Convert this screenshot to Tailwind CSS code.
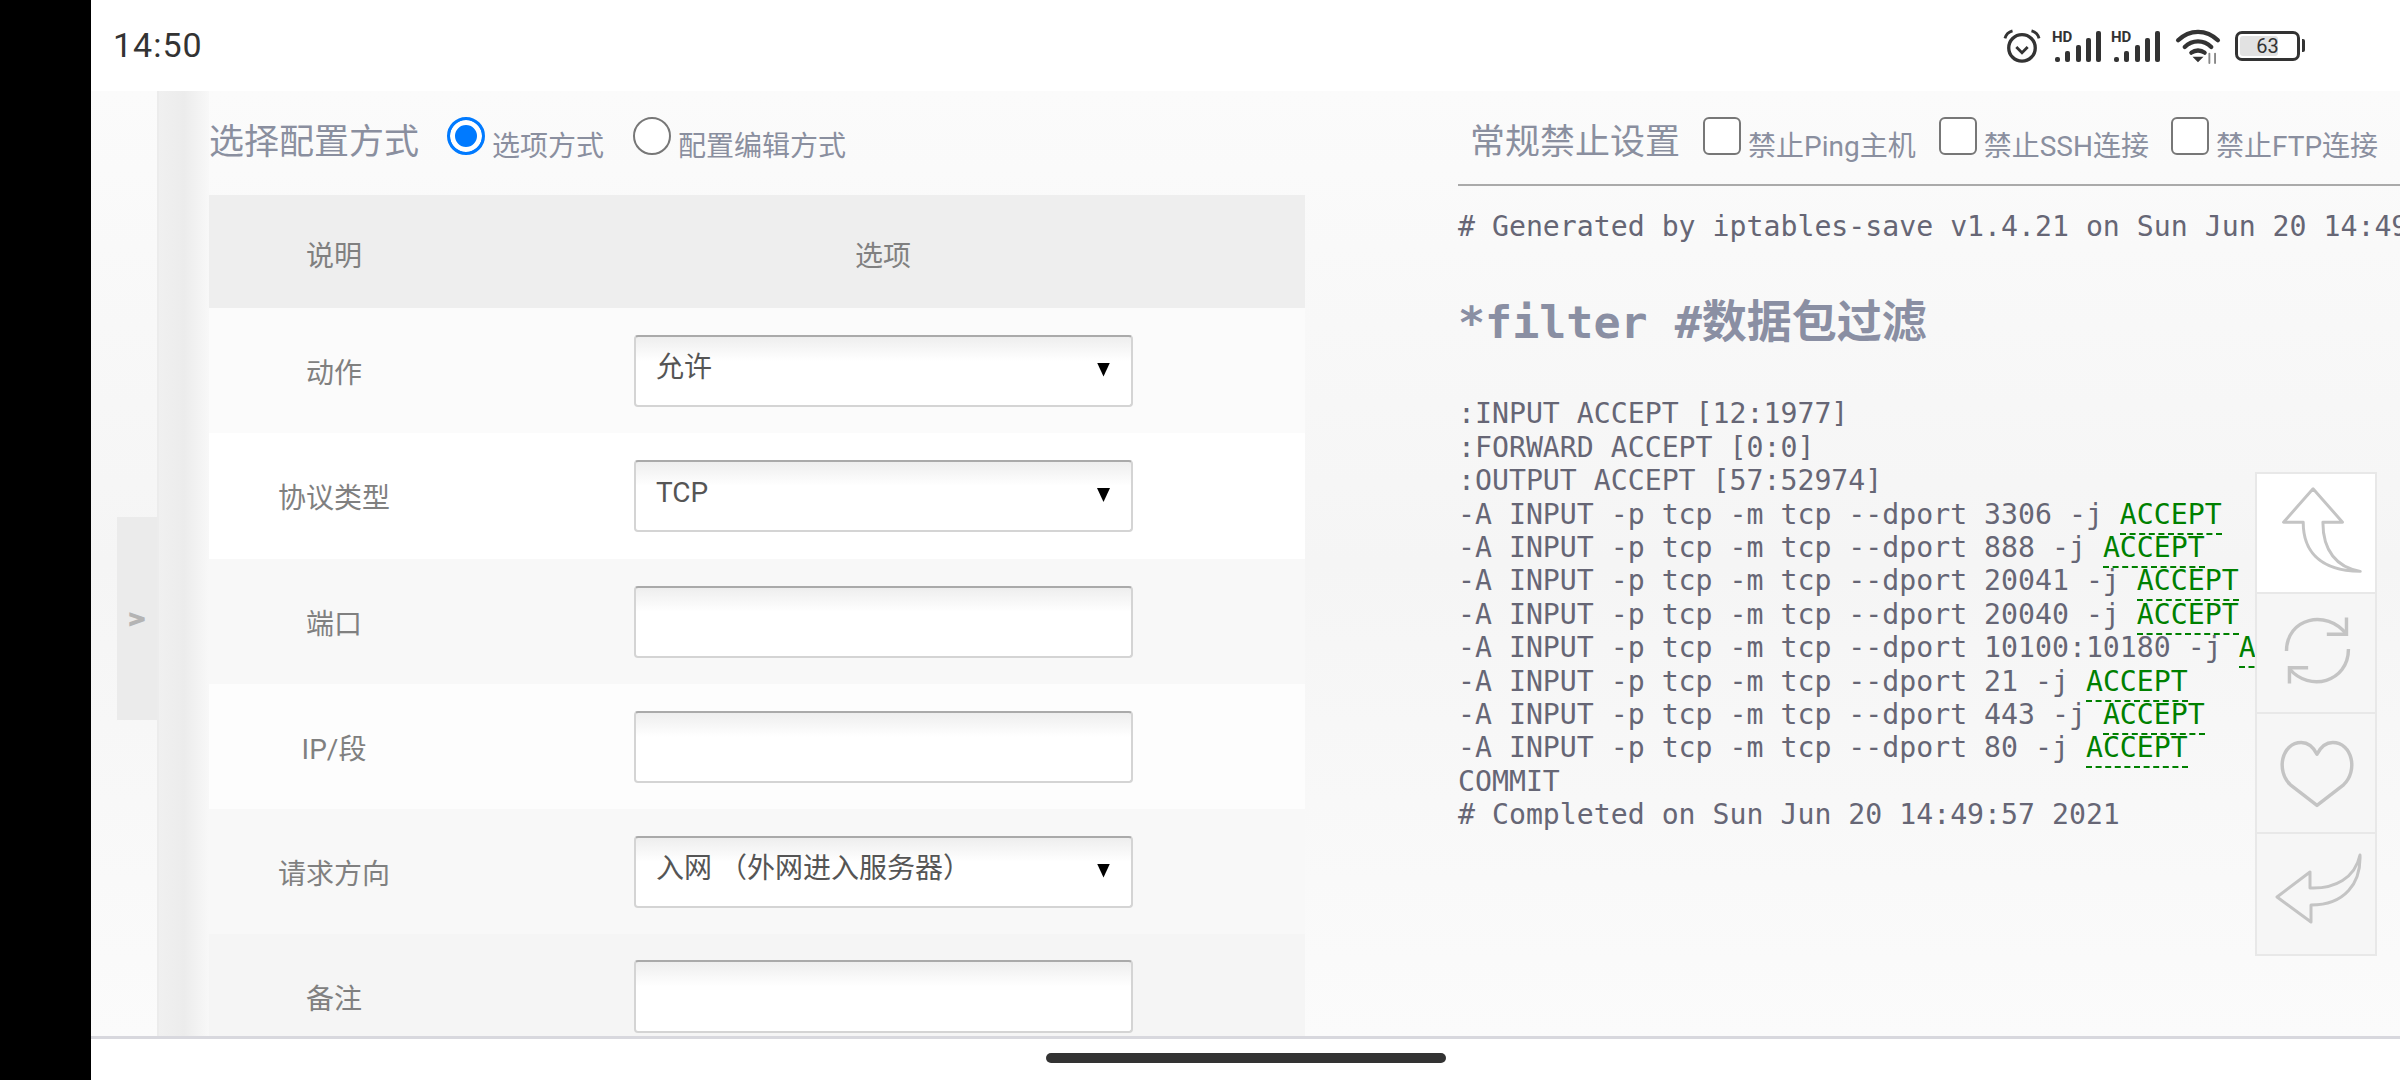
<!DOCTYPE html>
<html lang="zh-CN">
<head>
    <meta charset="UTF-8">
    <title>iptables</title>
    <script src="https://cdn.jsdelivr.net/npm/@tailwindcss/browser@4"></script>
</head>
<body class="bg-black overflow-hidden">
<div class="flex w-[2400px] h-[1080px] overflow-hidden [font-family:Roboto,'Noto_Sans_CJK_SC',sans-serif]">
    <div class="w-[91px] shrink-0 bg-black"></div>
    <div class="relative flex-1 flex flex-col min-w-0 bg-white">

        <!-- status bar -->
        <div class="h-[91px] shrink-0 flex items-center justify-between pl-[22px] pr-[95px]">
            <span class="text-[34px] text-[#333] tracking-[1px]">14:50</span>
            <div class="flex items-center">
                <svg class="w-[38px] h-[36px] text-[#333]" viewBox="0 0 40 38" fill="none" stroke="currentColor" stroke-width="3.5">
                    <circle cx="20" cy="21" r="14"/>
                    <path d="M14 20l6 6 6-6" stroke-width="3"/>
                    <path d="M2 11c1-4 4-7 8-8M38 11c-1-4-4-7-8-8" stroke-width="3"/>
                </svg>
                <div class="relative w-[51px] h-[36px] ml-[11px]">
                    <span class="absolute left-0 top-0 text-[15px] font-bold leading-[18px] text-[#333]">HD</span>
                    <svg class="absolute inset-0" viewBox="0 0 51 36" fill="#333">
                        <rect x="3" y="29" width="5" height="5" rx="2"/><rect x="13" y="23" width="5" height="11" rx="2"/><rect x="24" y="17" width="5" height="17" rx="2"/><rect x="34" y="10" width="5" height="24" rx="2"/><rect x="44" y="3" width="5" height="31" rx="2"/>
                    </svg>
                </div>
                <div class="relative w-[51px] h-[36px] ml-[8px]">
                    <span class="absolute left-0 top-0 text-[15px] font-bold leading-[18px] text-[#333]">HD</span>
                    <svg class="absolute inset-0" viewBox="0 0 51 36" fill="#333">
                        <rect x="3" y="29" width="5" height="5" rx="2"/><rect x="13" y="23" width="5" height="11" rx="2"/><rect x="24" y="17" width="5" height="17" rx="2"/><rect x="34" y="10" width="5" height="24" rx="2"/><rect x="44" y="3" width="5" height="31" rx="2"/>
                    </svg>
                </div>
                <svg class="w-[48px] h-[36px] ml-[12px] text-[#333]" viewBox="0 0 50 38" fill="none" stroke="currentColor" stroke-width="4.5" stroke-linecap="round">
                    <path d="M4 13c12-12 30-12 42 0"/>
                    <path d="M11 20c8-8 20-8 28 0"/>
                    <path d="M18 26c4-3 10-3 14 0"/>
                    <path d="M21 31h8l-4 4z" fill="currentColor" stroke-width="1.5"/>
                    <path d="M37 27v10M43 27v10" stroke="#888" stroke-width="2"/>
                </svg>
                <div class="flex items-center ml-[13px]">
                    <div class="relative w-[65px] h-[30px] border-[3px] border-[#333] rounded-[7px] overflow-hidden flex items-center justify-center">
                        <div class="absolute left-[2px] top-[2px] bottom-[2px] w-[38px] bg-[#e2e2e2] rounded-[3px]"></div>
                        <span class="relative text-[20px] leading-none text-[#333]">63</span>
                    </div>
                    <div class="w-[3px] h-[13px] ml-[2px] bg-[#333] rounded-r-[2px]"></div>
                </div>
            </div>
        </div>

        <!-- page content -->
        <div class="relative h-[945px] shrink-0 flex overflow-hidden bg-linear-to-b from-[#fbfbfb] via-[#f5f5f5] to-[#fbfbfb]">
            <div class="w-[68px] shrink-0 border-r-2 border-[#ececec]"></div>

            <div class="w-[50px] shrink-0 bg-linear-to-r from-[#f0f0f0] via-[#ececec] to-[#f8f8f8]"></div>

            <!-- left: option form -->
            <div class="w-[1096px] shrink-0">
                <div class="h-[104px] flex text-[#8a8f9f]">
                    <span class="text-[35px] leading-[52px] mt-[26px]">选择配置方式</span>
                    <label class="flex ml-[28px]">
                        <input type="radio" name="mode" checked class="appearance-none w-[38px] h-[38px] mt-[26px] rounded-full border-[3px] border-[#007aff] bg-[#007aff] shadow-[inset_0_0_0_5px_white]">
                        <span class="text-[28px] leading-[40px] ml-[7px] mt-[36px]">选项方式</span>
                    </label>
                    <label class="flex ml-[29px]">
                        <input type="radio" name="mode" class="appearance-none w-[38px] h-[38px] mt-[26px] rounded-full border-[2px] border-[#777] bg-white">
                        <span class="text-[28px] leading-[40px] ml-[7px] mt-[36px]">配置编辑方式</span>
                    </label>
                </div>

                <div class="text-[28px] text-[#808080]">
                    <div class="grid grid-cols-[250px_1fr] h-[113px] items-center text-center bg-[#eeeeee] pt-[10px]">
                        <span>说明</span>
                        <span class="pl-[2px]">选项</span>
                    </div>
                    <div class="grid grid-cols-[250px_1fr] h-[125px] items-center text-center bg-[#fbfbfb]">
                        <span class="pt-[6px]">动作</span>
                        <div class="relative w-[499px] h-[72px] ml-[175px]">
                            <select class="appearance-none w-full h-full pl-[20px] pb-[6px] rounded-[4px] border-2 border-[#d4d4d4] border-t-[#aaaaaa] text-[#555] bg-linear-to-b from-[#eeeeee] to-white to-[35%]"><option>允许</option></select>
                            <span class="absolute right-[23px] top-[28px] w-[13px] h-[14px] bg-black [clip-path:polygon(0_0,100%_0,50%_100%)]"></span>
                        </div>
                    </div>
                    <div class="grid grid-cols-[250px_1fr] h-[126px] items-center text-center bg-white">
                        <span class="pt-[6px]">协议类型</span>
                        <div class="relative w-[499px] h-[72px] ml-[175px]">
                            <select class="appearance-none w-full h-full pl-[20px] pb-[6px] rounded-[4px] border-2 border-[#d4d4d4] border-t-[#aaaaaa] text-[#555] bg-linear-to-b from-[#eeeeee] to-white to-[35%]"><option>TCP</option></select>
                            <span class="absolute right-[23px] top-[28px] w-[13px] h-[14px] bg-black [clip-path:polygon(0_0,100%_0,50%_100%)]"></span>
                        </div>
                    </div>
                    <div class="grid grid-cols-[250px_1fr] h-[125px] items-center text-center bg-[#f8f8f8]">
                        <span class="pt-[6px]">端口</span>
                        <input type="text" class="w-[499px] h-[72px] ml-[175px] rounded-[4px] border-2 border-[#d4d4d4] border-t-[#aaaaaa] bg-linear-to-b from-[#eeeeee] to-white to-[35%]">
                    </div>
                    <div class="grid grid-cols-[250px_1fr] h-[125px] items-center text-center bg-[#fdfdfd]">
                        <span class="pt-[6px]">IP/段</span>
                        <input type="text" class="w-[499px] h-[72px] ml-[175px] rounded-[4px] border-2 border-[#d4d4d4] border-t-[#aaaaaa] bg-linear-to-b from-[#eeeeee] to-white to-[35%]">
                    </div>
                    <div class="grid grid-cols-[250px_1fr] h-[125px] items-center text-center bg-[#f8f8f8]">
                        <span class="pt-[6px]">请求方向</span>
                        <div class="relative w-[499px] h-[72px] ml-[175px]">
                            <select class="appearance-none w-full h-full pl-[20px] pb-[6px] rounded-[4px] border-2 border-[#d4d4d4] border-t-[#aaaaaa] text-[#555] bg-linear-to-b from-[#eeeeee] to-white to-[35%]"><option>入网 （外网进入服务器）</option></select>
                            <span class="absolute right-[23px] top-[28px] w-[13px] h-[14px] bg-black [clip-path:polygon(0_0,100%_0,50%_100%)]"></span>
                        </div>
                    </div>
                    <div class="grid grid-cols-[250px_1fr] h-[125px] items-center text-center bg-[#f5f5f5]">
                        <span class="pt-[6px]">备注</span>
                        <input type="text" class="w-[499px] h-[73px] ml-[175px] rounded-[4px] border-2 border-[#d4d4d4] border-t-[#aaaaaa] bg-linear-to-b from-[#eeeeee] to-white to-[35%]">
                    </div>
                </div>
            </div>

            <!-- right: rules -->
            <div class="ml-[153px] flex-1 min-w-0">
                <div class="h-[95px] flex pl-[12px] border-b-2 border-[#aaaaaa] text-[#8a8f9f] whitespace-nowrap">
                    <span class="text-[35px] leading-[52px] mt-[26px]">常规禁止设置</span>
                    <input type="checkbox" class="appearance-none w-[38px] h-[38px] ml-[23px] mt-[26px] rounded-[6px] border-2 border-[#777] bg-white">
                    <span class="text-[28px] leading-[40px] ml-[7px] mt-[36px]">禁止Ping主机</span>
                    <input type="checkbox" class="appearance-none w-[38px] h-[38px] ml-[23px] mt-[26px] rounded-[6px] border-2 border-[#777] bg-white">
                    <span class="text-[28px] leading-[40px] ml-[7px] mt-[36px]">禁止SSH连接</span>
                    <input type="checkbox" class="appearance-none w-[38px] h-[38px] ml-[22px] mt-[26px] rounded-[6px] border-2 border-[#777] bg-white">
                    <span class="text-[28px] leading-[40px] ml-[7px] mt-[36px]">禁止FTP连接</span>
                </div>
                <div class="[font-family:'DejaVu_Sans_Mono','Noto_Sans_CJK_SC',monospace] text-[28.2px] leading-[33.4px] text-[#666675] whitespace-nowrap">
                    <div class="mt-[24px]"># Generated by iptables-save v1.4.21 on Sun Jun 20 14:49:57 2021</div>
                    <div class="mt-[50px] text-[45px] leading-[60px] font-bold text-[#8a8fa3]">*filter #数据包过滤</div>
                    <div class="mt-[44px]">:INPUT ACCEPT [12:1977]</div>
                    <div>:FORWARD ACCEPT [0:0]</div>
                    <div>:OUTPUT ACCEPT [57:52974]</div>
                    <div>-A INPUT -p tcp -m tcp --dport 3306 -j <span class="text-[#008000] pb-[2px] border-b-2 border-dashed border-[#008000]">ACCEPT</span></div>
                    <div>-A INPUT -p tcp -m tcp --dport 888 -j <span class="text-[#008000] pb-[2px] border-b-2 border-dashed border-[#008000]">ACCEPT</span></div>
                    <div>-A INPUT -p tcp -m tcp --dport 20041 -j <span class="text-[#008000] pb-[2px] border-b-2 border-dashed border-[#008000]">ACCEPT</span></div>
                    <div>-A INPUT -p tcp -m tcp --dport 20040 -j <span class="text-[#008000] pb-[2px] border-b-2 border-dashed border-[#008000]">ACCEPT</span></div>
                    <div>-A INPUT -p tcp -m tcp --dport 10100:10180 -j <span class="text-[#008000] pb-[2px] border-b-2 border-dashed border-[#008000]">ACCEPT</span></div>
                    <div>-A INPUT -p tcp -m tcp --dport 21 -j <span class="text-[#008000] pb-[2px] border-b-2 border-dashed border-[#008000]">ACCEPT</span></div>
                    <div>-A INPUT -p tcp -m tcp --dport 443 -j <span class="text-[#008000] pb-[2px] border-b-2 border-dashed border-[#008000]">ACCEPT</span></div>
                    <div>-A INPUT -p tcp -m tcp --dport 80 -j <span class="text-[#008000] pb-[2px] border-b-2 border-dashed border-[#008000]">ACCEPT</span></div>
                    <div>COMMIT</div>
                    <div># Completed on Sun Jun 20 14:49:57 2021</div>
                </div>
            </div>

            <!-- sidebar toggle -->
            <div class="absolute left-[26px] top-[426px] w-[40px] h-[203px] flex items-center justify-center bg-[#ebebeb] text-[22px] font-bold text-[#b4b4b4] [font-family:'DejaVu_Sans',sans-serif] [-webkit-text-stroke:1.5px_#b4b4b4]">&gt;</div>

            <!-- floating tool buttons -->
            <div class="absolute left-[2164px] top-[381px] w-[122px] border-2 border-[#e8e8e8] bg-[#f6f6f6] flex flex-col">
                <div class="h-[120px] bg-white border-b-2 border-[#e8e8e8]">
                    <svg class="w-full h-full" viewBox="0 0 118 120" fill="none" stroke="#c4c4c4" stroke-width="3" stroke-linejoin="round">
                        <path d="M56 15L26 49H46C46 76 60 98 104 99C80 95 66 78 66 49H86Z"/>
                    </svg>
                </div>
                <div class="h-[120px] border-b-2 border-[#e8e8e8]">
                    <svg class="w-full h-full" viewBox="0 0 118 120" fill="none" stroke="#c4c4c4" stroke-width="3.5">
                        <path d="M29 58C29 24 70 15 90 41"/>
                        <path d="M90 24V41H70"/>
                        <path d="M92 56C92 90 52 100 32 76"/>
                        <path d="M32 91V75H51"/>
                    </svg>
                </div>
                <div class="h-[120px] border-b-2 border-[#e8e8e8]">
                    <svg class="w-full h-full" viewBox="0 0 118 120" fill="none" stroke="#c4c4c4" stroke-width="3.5" stroke-linejoin="round">
                        <path d="M60 93L33 72C18 58 24 29 44 29C52 29 57 35 60 41C63 35 68 29 76 29C96 29 102 58 87 72Z"/>
                    </svg>
                </div>
                <div class="h-[120px]">
                    <svg class="w-full h-full" viewBox="0 0 118 120" fill="none" stroke="#c4c4c4" stroke-width="3" stroke-linejoin="round">
                        <path d="M20 63L53 38V54C78 55 98 44 103 21C104 49 88 71 54 71V88Z"/>
                    </svg>
                </div>
            </div>
        </div>

        <!-- gesture bar -->
        <div class="flex-1 flex justify-center border-t-[3px] border-[#d8d8de] bg-white">
            <div class="w-[400px] h-[10px] mt-[14px] rounded-full bg-[#333333]"></div>
        </div>
    </div>
</div>
</body>
</html>
